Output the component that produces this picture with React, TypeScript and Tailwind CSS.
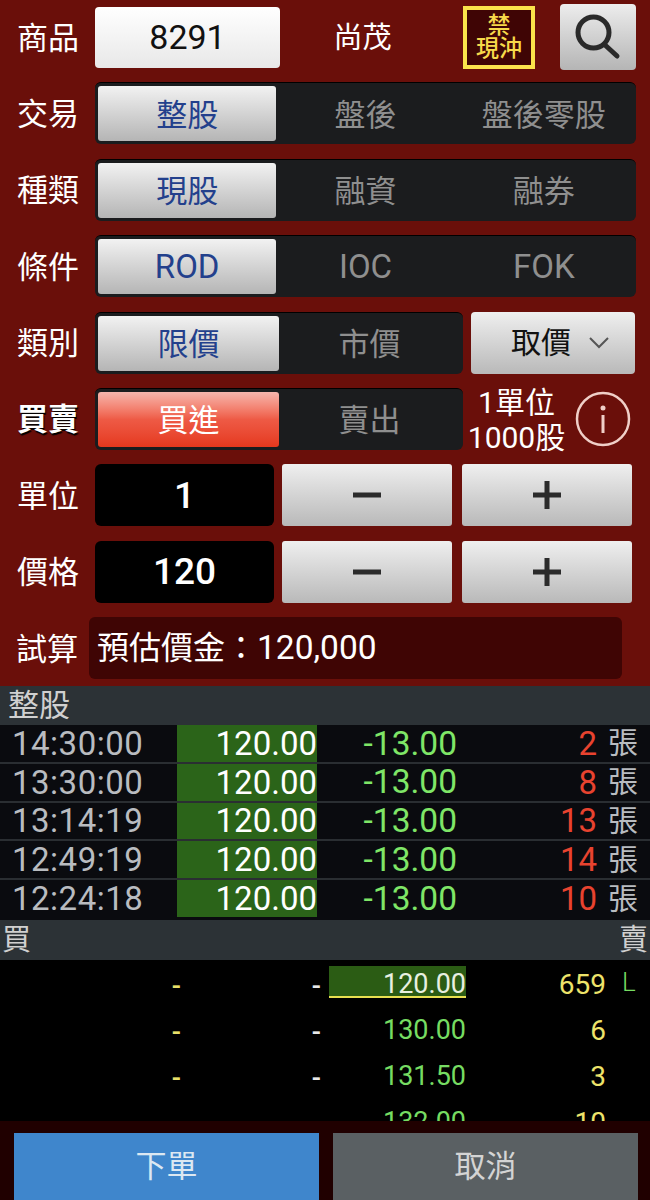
const font = { fontFamily: '"Roboto", "Noto Sans CJK TC", sans-serif' };

const ticks = [
  { time: "14:30:00", qty: "2" },
  { time: "13:30:00", qty: "8" },
  { time: "13:14:19", qty: "13" },
  { time: "12:49:19", qty: "14" },
  { time: "12:24:18", qty: "10" },
];

const book = [
  { price: "120.00", qty: "659", hit: true },
  { price: "130.00", qty: "6" },
  { price: "131.50", qty: "3" },
  { price: "132.00", qty: "10" },
];

function Label({ text, bold }: { text: string; bold?: boolean }) {
  return (
    <div
      className={`w-[95px] shrink-0 pl-[17px] pt-[2px] text-[31px] leading-none text-white ${
        bold ? "font-bold [text-shadow:1px_2px_1px_#000]" : ""
      }`}
    >
      {text}
    </div>
  );
}

function Segment({
  options,
  danger,
  latin,
  className,
}: {
  options: string[];
  danger?: boolean;
  latin?: boolean;
  className: string;
}) {
  return (
    <div className={`flex h-full rounded-md border-t border-black bg-[#1b1c1e] p-[3px] ${className}`}>
      {options.map((o, i) => (
        <div
          key={o}
          className={`flex flex-1 items-center justify-center leading-none ${
            latin ? "text-[33px]" : "pt-[3px] text-[31px]"
          } ${
            i > 0
              ? "text-[#8f8f8f]"
              : danger
              ? "rounded-[3px] bg-gradient-to-b from-[#f5b5ad] via-[#ee5a45] to-[#e5381d] text-white"
              : "rounded-[3px] bg-gradient-to-b from-[#f2f2f2] to-[#b5b5b5] text-[#23408c]"
          }`}
        >
          {o}
        </div>
      ))}
    </div>
  );
}

function Stepper({ sign }: { sign: string }) {
  return (
    <div className="flex h-full w-[170px] items-center justify-center rounded-[3px] bg-gradient-to-b from-[#efefef] to-[#b9b9b9]">
      <svg width="28" height="28" viewBox="0 0 28 28">
        <rect x="0" y="11.5" width="28" height="5" fill="#2b2b2b" />
        {sign === "+" && <rect x="11.5" y="0" width="5" height="28" fill="#2b2b2b" />}
      </svg>
    </div>
  );
}

function Row({ children }: { children: React.ReactNode }) {
  return <div className="flex h-[62px] shrink-0 items-center">{children}</div>;
}

export default function App() {
  return (
    <div className="flex h-[1200px] w-[650px] flex-col overflow-hidden bg-black" style={font}>
      {/* Order form */}
      <div className="flex h-[686px] shrink-0 flex-col gap-[14.4px] bg-[#6a0f0a] pt-[6px]">
        <Row>
          <Label text="商品" />
          <div className="flex h-[61px] w-[185px] items-center justify-center rounded-[4px] bg-gradient-to-b from-white to-[#e8e8e8] text-[34px] text-[#111]">
            8291
          </div>
          <div className="w-[165px] pt-[3px] text-center text-[29px] leading-none text-white">尚茂</div>
          <div className="ml-[18px] flex h-[63px] w-[72px] flex-col items-center justify-center border-[4px] border-[#fbe34b] bg-[#3f0505] text-[23px] font-medium leading-[23px] text-[#f7d94a]">
            <div>禁</div>
            <div>現沖</div>
          </div>
          <div className="ml-[25px] flex h-[66px] w-[76px] items-center justify-center rounded-[4px] bg-gradient-to-b from-[#ededed] to-[#b5b5b5]">
            <svg width="48" height="48" viewBox="0 0 48 48" fill="none" stroke="#2a2a2a" strokeWidth="5">
              <circle cx="19.5" cy="19.5" r="15.5" />
              <path d="M31 32 L43 43" strokeLinecap="round" />
            </svg>
          </div>
        </Row>
        <Row>
          <Label text="交易" />
          <Segment options={["整股", "盤後", "盤後零股"]} className="w-[541px]" />
        </Row>
        <Row>
          <Label text="種類" />
          <Segment options={["現股", "融資", "融券"]} className="w-[541px]" />
        </Row>
        <Row>
          <Label text="條件" />
          <Segment options={["ROD", "IOC", "FOK"]} latin className="w-[541px]" />
        </Row>
        <Row>
          <Label text="類別" />
          <Segment options={["限價", "市價"]} className="w-[368px]" />
          <div className="ml-[8px] flex h-full w-[164px] items-center justify-center gap-[18px] rounded-[4px] bg-gradient-to-b from-[#efefef] to-[#b9b9b9] pl-[14px] text-[30px] leading-none text-[#111]">
            取價
            <svg width="20" height="12" viewBox="0 0 20 12" fill="none" stroke="#555" strokeWidth="2">
              <path d="M1 1 L10 10 L19 1" />
            </svg>
          </div>
        </Row>
        <Row>
          <Label text="買賣" bold />
          <Segment options={["買進", "賣出"]} danger className="w-[368px]" />
          <div className="w-[107px] pt-[2px] text-center text-[30px] leading-[35px] text-white">
            <div>1單位</div>
            <div>1000股</div>
          </div>
          <svg className="ml-[5px]" width="56" height="56" viewBox="0 0 56 56" fill="none" stroke="#f0cfc8" strokeWidth="2.5">
            <circle cx="28" cy="28" r="26" />
            <circle cx="28" cy="17" r="2.5" fill="#f0cfc8" stroke="none" />
            <path d="M28 24 V42" strokeWidth="3" />
          </svg>
        </Row>
        <Row>
          <Label text="單位" />
          <div className="flex h-full w-[179px] items-center justify-center rounded-md bg-black text-[37px] font-medium leading-none text-white">
            1
          </div>
          <div className="ml-[8px] h-full">
            <Stepper sign="-" />
          </div>
          <div className="ml-[10px] h-full">
            <Stepper sign="+" />
          </div>
        </Row>
        <Row>
          <Label text="價格" />
          <div className="flex h-full w-[179px] items-center justify-center rounded-md bg-black text-[37px] font-medium leading-none text-white">
            120
          </div>
          <div className="ml-[8px] h-full">
            <Stepper sign="-" />
          </div>
          <div className="ml-[10px] h-full">
            <Stepper sign="+" />
          </div>
        </Row>
        <Row>
          <div className="w-[89px] shrink-0 pl-[16px] pt-[2px] text-[31px] leading-none text-white">試算</div>
          <div className="flex h-full w-[533px] items-center rounded-md bg-[#3f0504] pl-[8px] text-[32px] leading-none text-white">
            預估價金：<span className="text-[33.5px]">120,000</span>
          </div>
        </Row>
      </div>

      {/* Ticks */}
      <div className="flex h-[39px] shrink-0 items-center bg-[#2c3236] pl-[8px] text-[31px] leading-none text-[#d0d0d0]">
        整股
      </div>
      <div className="h-[195px] shrink-0 bg-[#0a0b0f]">
        {ticks.map((t, i) => (
          <div
            key={t.time}
            className={`grid h-[38.8px] grid-cols-[177px_140px_140px_140px_53px] items-center border-b-2 text-[33px] leading-none ${
              i < ticks.length - 1 ? "border-[#2a2e32]" : "border-transparent"
            }`}
          >
            <div className="pl-[12px] tracking-[0.5px] text-[#b9bcc0]">{t.time}</div>
            <div className="flex h-full items-center justify-end bg-[#2b6419] text-white">120.00</div>
            <div className="text-right text-[33.5px] text-[#7fe667]">-13.00</div>
            <div className="text-right text-[#e8432f]">{t.qty}</div>
            <div className="pl-[11px] text-[30px] text-[#b9bcc0]">張</div>
          </div>
        ))}
      </div>

      {/* Order book */}
      <div className="flex h-[40px] shrink-0 items-center justify-between bg-[#2c3236] px-[2px] text-[29px] leading-none text-[#d0d0d0]">
        <span>買</span>
        <span>賣</span>
      </div>
      <div className="h-[161px] shrink-0 overflow-hidden bg-black pt-[2px]">
        {book.map((b) => (
          <div
            key={b.price}
            className="grid h-[46px] grid-cols-[181px_140px_8px_137px_140px_44px] items-center text-[27px] leading-none"
          >
            <div className="pt-[2px] text-right font-medium text-[#e8e06a]">-</div>
            <div className="pt-[2px] text-right font-medium text-[#e8e8e8]">-</div>
            <div />
            <div
              className={`flex items-center justify-end ${
                b.hit
                  ? "mb-[6px] h-[32px] border-b-2 border-[#e8e050] bg-[#2b5c14] pt-[7px] text-[#e8f0e0]"
                  : "pb-[1px] text-[#76dc62]"
              }`}
            >
              {b.price}
            </div>
            <div className="text-right text-[28px] text-[#ede36a]">{b.qty}</div>
            <div className="pb-[6px] pl-[16px] text-[26px] font-light text-[#76dc62]">{b.hit ? "L" : ""}</div>
          </div>
        ))}
      </div>

      {/* Actions */}
      <div className="flex flex-1 gap-[14px] bg-[#200000] pl-[14px] pt-[12px]">
        <div className="flex w-[305px] shrink-0 items-center justify-center bg-[#3f86cc] text-[31px] leading-none text-[#dce8f2]">
          下單
        </div>
        <div className="flex w-[305px] shrink-0 items-center justify-center bg-[#5a6063] text-[31px] leading-none text-[#d4d4d4]">
          取消
        </div>
      </div>
    </div>
  );
}
